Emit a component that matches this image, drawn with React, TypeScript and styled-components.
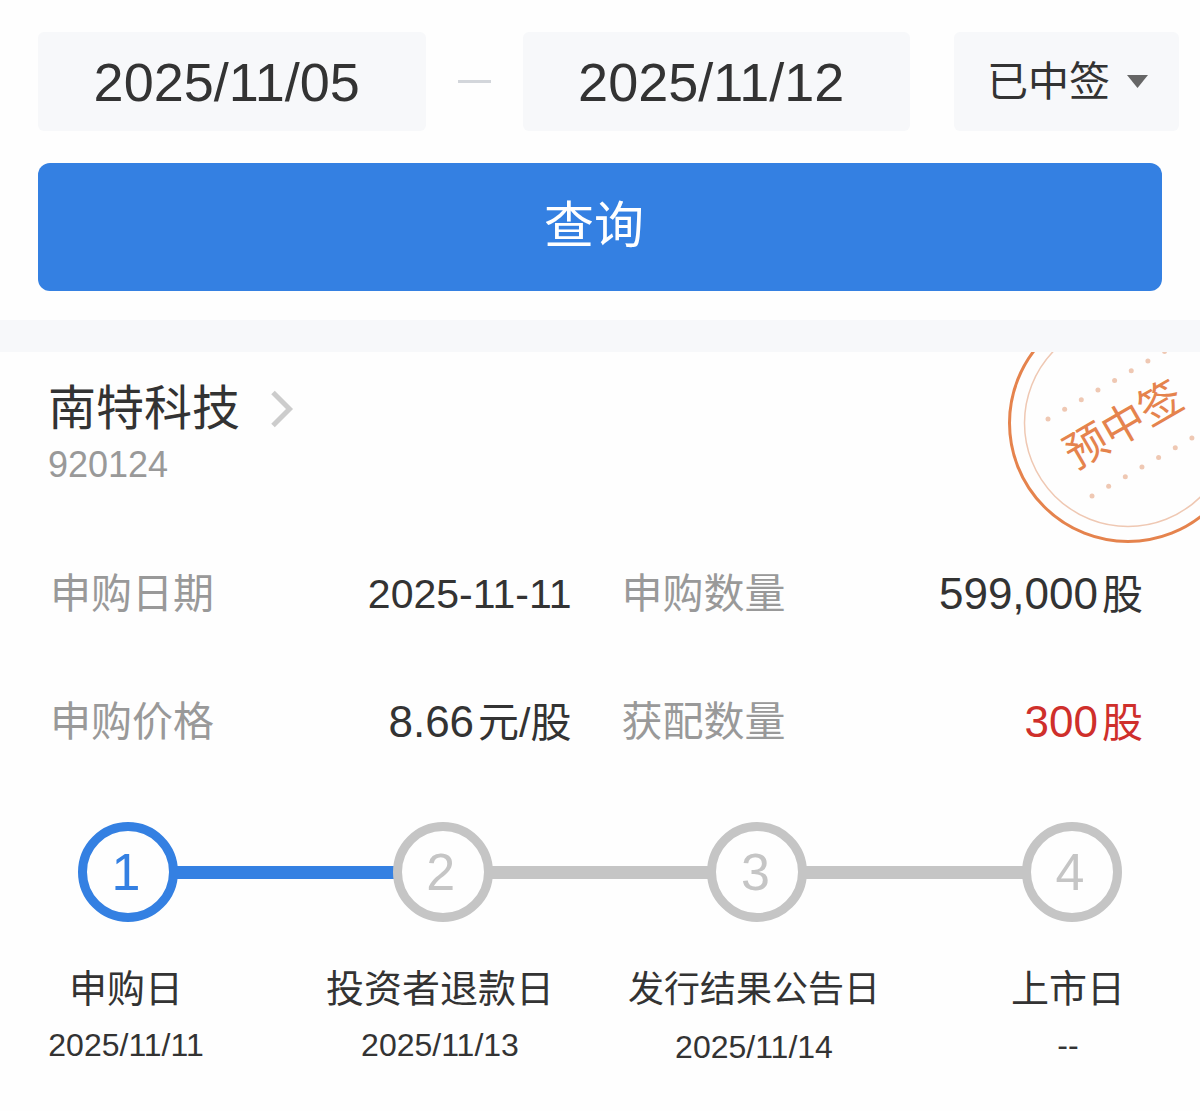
import React, { useState } from 'react';
import styled, { createGlobalStyle } from 'styled-components';

const colors = {
  ink: '#333333',
  muted: '#999999',
  blue: '#3480e2',
  red: '#cf2f2b',
  line: '#c5c5c5',
  field: '#f7f8fa',
  stamp: '#e5834d',
  stampSoft: '#efc8b3',
};

const GlobalStyle = createGlobalStyle`
  * {
    box-sizing: border-box;
  }
  body {
    margin: 0;
    background: #fefefe;
    color: ${colors.ink};
    font-family: 'Liberation Sans', 'Noto Sans CJK SC', sans-serif;
  }
  input, select, button {
    font-family: inherit;
    color: inherit;
  }
`;

const SearchForm = styled.form`
  padding: 32px 0 29px 38px;
`;

const FilterRow = styled.div`
  display: flex;
  align-items: center;
  padding-right: 21px;
`;

const DateInput = styled.input`
  flex: 1 1 0;
  min-width: 0;
  height: 99px;
  padding: 0 10px 0 0;
  border: 0;
  border-radius: 6px;
  background: ${colors.field};
  font-size: 54px;
  text-align: center;
`;

const RangeDash = styled.span`
  width: 33px;
  height: 3px;
  margin: 0 32px;
  background: #d3d6db;
`;

const SelectBox = styled.div`
  position: relative;
  width: 225px;
  margin-left: 44px;
`;

const StatusSelect = styled.select`
  appearance: none;
  display: block;
  width: 100%;
  height: 99px;
  padding: 0 60px 0 33px;
  border: 0;
  border-radius: 6px;
  background: ${colors.field};
  font-size: 41px;
`;

const Caret = styled.svg`
  position: absolute;
  right: 31px;
  top: 43px;
  width: 21px;
  height: 13px;
  fill: #666666;
  pointer-events: none;
`;

const QueryButton = styled.button`
  display: block;
  width: calc(100% - 38px);
  height: 128px;
  margin-top: 32px;
  padding: 0 12px 12px 0;
  border: 0;
  border-radius: 12px;
  background: ${colors.blue};
  color: #ffffff;
  font-size: 50px;
`;

const Divider = styled.div`
  height: 32px;
  background: ${colors.field};
`;

const Record = styled.article`
  position: relative;
  overflow: hidden;
  padding: 24px 0 36px;
`;

const StockLink = styled.a`
  display: inline-flex;
  flex-direction: column;
  padding-left: 48px;
  color: inherit;
  text-decoration: none;
`;

const StockName = styled.span`
  display: flex;
  align-items: center;
  gap: 31px;
  font-size: 48px;
  line-height: 66px;
`;

const StockCode = styled.span`
  color: ${colors.muted};
  font-size: 36px;
  line-height: 46px;
`;

const Stamp = styled.svg`
  position: absolute;
  top: -50px;
  right: -48px;
  width: 240px;
  height: 242px;
`;

const StampText = styled.text`
  fill: ${colors.stamp};
  font-size: 43px;
  text-anchor: middle;
`;

const Details = styled.dl`
  display: grid;
  grid-template-columns: 1fr 1fr;
  grid-auto-rows: 128px;
  column-gap: 50px;
  margin: 42px 0 0;
  padding: 0 57px 0 50px;
`;

const Detail = styled.div`
  display: flex;
  align-items: center;
  justify-content: space-between;
  line-height: 60px;
`;

const DetailLabel = styled.dt`
  color: ${colors.muted};
  font-size: 41px;
`;

const DetailValue = styled.dd<{ $highlight?: boolean }>`
  display: flex;
  align-items: baseline;
  gap: 4px;
  margin: 0;
  color: ${(p) => (p.$highlight ? colors.red : colors.ink)};
  font-size: 41px;
`;

const Amount = styled.span`
  font-size: 44px;
`;

const Track = styled.div`
  display: flex;
  align-items: center;
  margin-top: 36px;
  padding: 0 78px;
`;

const Circle = styled.span<{ $active: boolean }>`
  display: flex;
  align-items: center;
  justify-content: center;
  width: 100px;
  height: 100px;
  padding-right: 4px;
  border: 9px solid ${(p) => (p.$active ? colors.blue : colors.line)};
  border-radius: 50%;
  color: ${(p) => (p.$active ? colors.blue : colors.line)};
  font-size: 52px;
`;

const Connector = styled.span<{ $active: boolean }>`
  flex: 1;
  height: 13px;
  margin: 0 -2px;
  background: ${(p) => (p.$active ? colors.blue : colors.line)};
`;

const StepLabels = styled.ol`
  display: flex;
  justify-content: space-between;
  margin: 39px 0 0;
  padding: 0 82px 0 76px;
  list-style: none;
`;

const StepLabel = styled.li`
  display: flex;
  flex-direction: column;
  align-items: center;
  width: 100px;
  white-space: nowrap;
`;

const StepTitle = styled.span<{ $compact: boolean }>`
  font-size: ${(p) => (p.$compact ? 36 : 38)}px;
  line-height: ${(p) => (p.$compact ? 58 : 56)}px;
`;

const StepDate = styled.time`
  font-size: 32px;
  line-height: 56px;
`;

const details = [
  { label: '申购日期', text: '2025-11-11' },
  { label: '申购数量', amount: '599,000', text: '股' },
  { label: '申购价格', amount: '8.66', text: '元/股' },
  { label: '获配数量', amount: '300', text: '股', highlight: true },
];

const steps = [
  { title: '申购日', date: '2025/11/11' },
  { title: '投资者退款日', date: '2025/11/13' },
  { title: '发行结果公告日', date: '2025/11/14' },
  { title: '上市日', date: '--' },
];

const currentStep = 0;

function Dots({ x, y, count }: { x: number; y: number; count: number }) {
  return (
    <g fill={colors.stampSoft}>
      {Array.from({ length: count }, (_, i) => (
        <circle key={i} cx={x + i * 16.65} cy={y - i * 9.65} r={2.5} />
      ))}
    </g>
  );
}

function WinningStamp() {
  return (
    <Stamp viewBox="0 0 240 242" role="img" aria-label="预中签">
      <circle cx="120" cy="121" r="118.5" fill="none" stroke={colors.stamp} strokeWidth="3" />
      <circle cx="120" cy="121" r="103.5" fill="none" stroke={colors.stampSoft} strokeWidth="1.5" />
      <Dots x={40} y={117} count={9} />
      <Dots x={84} y={194} count={8} />
      <StampText transform="translate(115 122) rotate(-30)" y="16">
        预中签
      </StampText>
    </Stamp>
  );
}

export default function App() {
  const [from, setFrom] = useState('2025/11/05');
  const [to, setTo] = useState('2025/11/12');

  return (
    <>
      <GlobalStyle />
      <main>
        <SearchForm onSubmit={(e) => e.preventDefault()}>
          <FilterRow>
            <DateInput aria-label="开始日期" value={from} onChange={(e) => setFrom(e.target.value)} />
            <RangeDash />
            <DateInput aria-label="结束日期" value={to} onChange={(e) => setTo(e.target.value)} />
            <SelectBox>
              <StatusSelect aria-label="状态" defaultValue="won">
                <option value="won">已中签</option>
              </StatusSelect>
              <Caret viewBox="0 0 21 13" aria-hidden="true">
                <path d="M0 0H21L10.5 13Z" />
              </Caret>
            </SelectBox>
          </FilterRow>
          <QueryButton type="submit">查询</QueryButton>
        </SearchForm>
        <Divider />
        <Record>
          <StockLink href="#stock">
            <StockName>
              南特科技
              <svg width="24" height="38" viewBox="0 0 24 38" fill="none" aria-hidden="true">
                <path d="M2 2.5L18.5 19L2 35.5" stroke="#cccccc" strokeWidth="5" />
              </svg>
            </StockName>
            <StockCode>920124</StockCode>
          </StockLink>
          <WinningStamp />
          <Details>
            {details.map((d) => (
              <Detail key={d.label}>
                <DetailLabel>{d.label}</DetailLabel>
                <DetailValue $highlight={d.highlight}>
                  {d.amount && <Amount>{d.amount}</Amount>}
                  <span>{d.text}</span>
                </DetailValue>
              </Detail>
            ))}
          </Details>
          <Track>
            {steps.map((s, i) => (
              <React.Fragment key={s.title}>
                {i > 0 && <Connector $active={i - 1 <= currentStep} />}
                <Circle $active={i <= currentStep}>{i + 1}</Circle>
              </React.Fragment>
            ))}
          </Track>
          <StepLabels>
            {steps.map((s) => (
              <StepLabel key={s.title}>
                <StepTitle $compact={s.title.length > 6}>{s.title}</StepTitle>
                <StepDate>{s.date}</StepDate>
              </StepLabel>
            ))}
          </StepLabels>
        </Record>
      </main>
    </>
  );
}
